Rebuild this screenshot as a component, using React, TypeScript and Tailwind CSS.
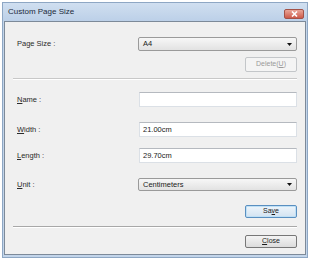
import React from "react";

const font = { fontFamily: '"Liberation Sans", Arial, sans-serif' };

function Arrow() {
  return (
    <svg width="5" height="3" viewBox="0 0 5 3" className="shrink-0">
      <path d="M0 0 H5 L2.5 3 Z" fill="#111" />
    </svg>
  );
}

function Combo({ value, className }: { value: string; className: string }) {
  return (
    <div
      className={`ml-auto flex w-[159px] items-center justify-between rounded-[2px] border border-[#9a9a9a] bg-gradient-to-b from-[#f7f7f7] to-[#e2e2e2] pl-[4px] pr-[4px] text-[7.5px] text-[#1a1a1a] ${className}`}
    >
      <span>{value}</span>
      <Arrow />
    </div>
  );
}

function Input({ value, className }: { value: string; className: string }) {
  return (
    <div
      className={`ml-auto flex w-[158px] items-center border border-[#dbe0e6] border-t-[#b5b9bf] bg-white pl-[3px] text-[7.5px] text-[#1a1a1a] ${className}`}
    >
      {value}
    </div>
  );
}

function Label({ children }: { children: React.ReactNode }) {
  return <span className="text-[7.5px] text-[#2a2a2a]">{children}</span>;
}

export default function App() {
  return (
    <div className="h-[259px] w-[309px] bg-white" style={font}>
      <div className="ml-[2px] pt-[2px]">
        <div className="flex h-[256px] w-[306px] flex-col border border-[#8ea7c4] bg-[#c3d5ea]">
          {/* title bar */}
          <div className="flex h-[18px] items-center bg-gradient-to-b from-[#d0dff0] to-[#bcd0e8] pl-[5px] pr-[3px]">
            <span className="text-[8px] text-[#1c2a3a]">Custom Page Size</span>
            <div className="ml-auto mt-[3px] flex h-[10px] w-[20px] items-center justify-center rounded-[2px] border border-[#a35248] bg-gradient-to-b from-[#e9a598] to-[#cc5a4a]">
              <svg width="7" height="6" viewBox="0 0 7 6">
                <path d="M1 0.5 L6 5.5 M6 0.5 L1 5.5" stroke="#fff" strokeWidth="1.6" />
              </svg>
            </div>
          </div>
          {/* client */}
          <div className="mx-[1px] mb-[2px] flex flex-1 flex-col border border-[#7d8a99] bg-[#f0f0f0] pl-[8px] pr-[8px]">
            <div className="mt-[15px] flex h-[14px] items-center pl-[4px]">
              <Label>Page Size :</Label>
              <Combo value="A4" className="h-[14px]" />
            </div>
            <div className="mt-[6px] flex justify-end">
              <div className="flex h-[15px] w-[52px] items-center justify-center rounded-[2px] border border-[#c3c6c9] bg-[#f4f4f4] text-[7px] text-[#9a9a9a]">
                Delete(<span className="underline">U</span>)
              </div>
            </div>
            <div className="mt-[6px] h-[2px] border-t border-b border-t-[#c8c8c8] border-b-white" />
            <div className="mt-[12px] flex h-[15px] items-center pl-[4px]">
              <Label>
                <span className="underline">N</span>ame :
              </Label>
              <Input value="" className="h-[15px]" />
            </div>
            <div className="mt-[15px] flex h-[15px] items-center pl-[4px]">
              <Label>
                <span className="underline">W</span>idth :
              </Label>
              <Input value="21.00cm" className="h-[15px]" />
            </div>
            <div className="mt-[11px] flex h-[15px] items-center pl-[4px]">
              <Label>
                <span className="underline">L</span>ength :
              </Label>
              <Input value="29.70cm" className="h-[15px]" />
            </div>
            <div className="mt-[15px] flex h-[13px] items-center pl-[4px]">
              <Label>
                <span className="underline">U</span>nit :
              </Label>
              <Combo value="Centimeters" className="h-[13px]" />
            </div>
            <div className="mt-[14px] flex justify-end">
              <div className="flex h-[13px] w-[52px] items-center justify-center rounded-[2px] border border-[#5a8fc0] bg-gradient-to-b from-[#eef5fb] to-[#d3e3f1] text-[7px] text-[#1a1a1a] shadow-[inset_0_0_0_1px_#bfe0f6]">
                Sa<span className="underline">v</span>e
              </div>
            </div>
            <div className="mt-[8px] h-[2px] border-t border-b border-t-[#a8a8a8] border-b-white" />
            <div className="mt-[7px] flex justify-end">
              <div className="flex h-[13px] w-[52px] items-center justify-center rounded-[2px] border border-[#777] bg-gradient-to-b from-[#f4f4f4] to-[#dcdcdc] text-[7px] text-[#1a1a1a]">
                <span className="underline">C</span>lose
              </div>
            </div>
          </div>
        </div>
      </div>
    </div>
  );
}
